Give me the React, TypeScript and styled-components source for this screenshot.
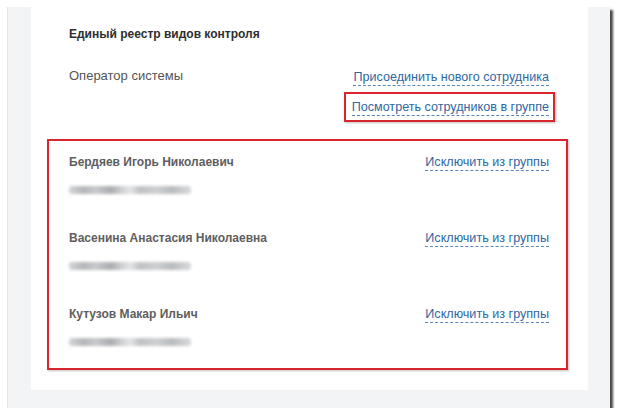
import React from "react";
import styled, { createGlobalStyle } from "styled-components";

const GlobalStyle = createGlobalStyle`
  html, body {
    margin: 0;
    padding: 0;
    background: #ffffff;
    font-family: "Liberation Sans", Arial, sans-serif;
  }
`;

type Member = { id: number; name: string };

const members: Member[] = [
  { id: 1, name: "Бердяев Игорь Николаевич" },
  { id: 2, name: "Васенина Анастасия Николаевна" },
  { id: 3, name: "Кутузов Макар Ильич" },
];

const App: React.FC = () => {
  return (
    <>
      <GlobalStyle />
      <Frame>
        <Panel>
          <Header>
            <Title>Единый реестр видов контроля</Title>
            <RoleRow>
              <Role>Оператор системы</Role>
              <Actions>
                <Link>Присоединить нового сотрудника</Link>
                <Highlight>
                  <Link>Посмотреть сотрудников в группе</Link>
                </Highlight>
              </Actions>
            </RoleRow>
          </Header>
          <MemberList>
            {members.map((m) => (
              <MemberRow key={m.id}>
                <MemberInfo>
                  <MemberName>{m.name}</MemberName>
                  <Hidden />
                </MemberInfo>
                <Link>Исключить из группы</Link>
              </MemberRow>
            ))}
          </MemberList>
        </Panel>
      </Frame>
    </>
  );
};

export default App;

const Frame = styled.div`
  box-sizing: border-box;
  margin: 7px 0 0 7px;
  width: 603px;
  height: 401px;
  padding: 0 22px 18px 23px;
  background: #f3f4f5;
  border-left: 1px solid #e6e7e8;
  box-shadow: 3px 3px 2px rgba(30, 30, 30, 0.8);
  display: flex;
`;

const Panel = styled.section`
  flex: 1;
  background: #ffffff;
  padding: 19px 20px 0 16px;
  display: flex;
  flex-direction: column;
`;

const Header = styled.div`
  padding: 0 19px 0 22px;
  display: flex;
  flex-direction: column;
  gap: 26px;
`;

const Title = styled.h2`
  margin: 0;
  font-size: 12px;
  line-height: 16px;
  font-weight: bold;
  color: #2e2e2e;
`;

const RoleRow = styled.div`
  display: flex;
  justify-content: space-between;
  align-items: flex-start;
`;

const Role = styled.div`
  font-size: 13px;
  line-height: 16px;
  color: #555555;
`;

const Actions = styled.div`
  display: flex;
  flex-direction: column;
  align-items: flex-end;
  gap: 6px;
  padding-top: 1px;
`;

const Link = styled.a`
  display: inline-block;
  font-size: 12.6px;
  line-height: 16px;
  color: #2f67a1;
  text-decoration: none;
  border-bottom: 1px dashed #5b86b8;
  cursor: pointer;
  white-space: nowrap;
`;

const Highlight = styled.div`
  border: 2px solid #d9262e;
  padding: 3px 4px 4px 6px;
  margin-right: -6px;
  box-shadow: 1px 1px 2px rgba(0, 0, 0, 0.25);
`;

const MemberList = styled.div`
  margin-top: 17px;
  border: 2px solid #d9262e;
  box-shadow: 1px 1px 2px rgba(0, 0, 0, 0.25);
  padding: 13px 17px 22px 20px;
  display: flex;
  flex-direction: column;
  gap: 36px;
`;

const MemberRow = styled.div`
  display: flex;
  justify-content: space-between;
  align-items: flex-start;
`;

const MemberInfo = styled.div`
  display: flex;
  flex-direction: column;
  gap: 16px;
`;

const MemberName = styled.div`
  font-size: 12px;
  line-height: 16px;
  font-weight: bold;
  color: #5e5e5e;
`;

const Hidden = styled.div`
  width: 122px;
  height: 8px;
  border-radius: 3px;
  background: linear-gradient(
    90deg,
    #d2d4d6 0%,
    #b4b7ba 12%,
    #c6c8ca 22%,
    #a9adb1 34%,
    #d0d2d3 44%,
    #e4e5e6 50%,
    #bfc2c4 58%,
    #cdd0d1 72%,
    #b8bbbe 84%,
    #d9dadb 100%
  );
  filter: blur(1.5px);
`;
